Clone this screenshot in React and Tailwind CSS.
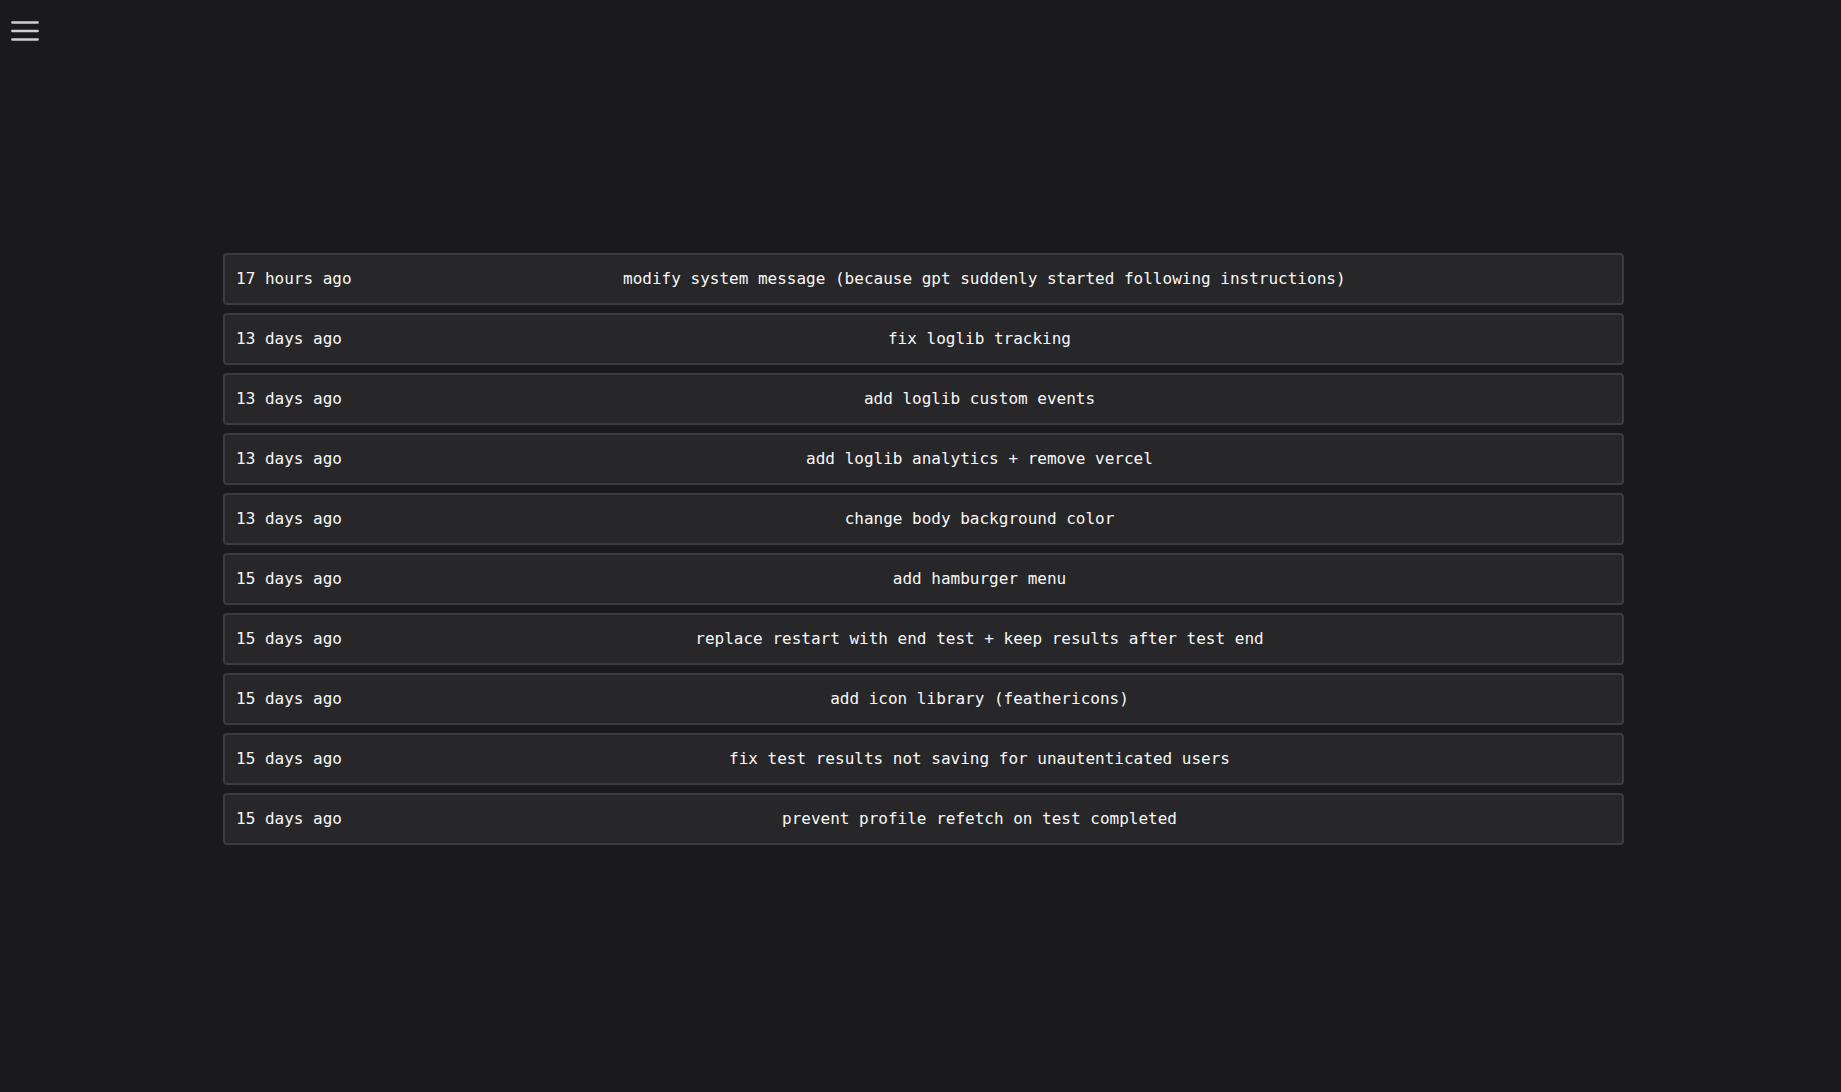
import React from 'react';

const commits = [
    { when: '17 hours ago', msg: 'modify system message (because gpt suddenly started following instructions)' },
    { when: '13 days ago', msg: 'fix loglib tracking' },
    { when: '13 days ago', msg: 'add loglib custom events' },
    { when: '13 days ago', msg: 'add loglib analytics + remove vercel' },
    { when: '13 days ago', msg: 'change body background color' },
    { when: '15 days ago', msg: 'add hamburger menu' },
    { when: '15 days ago', msg: 'replace restart with end test + keep results after test end' },
    { when: '15 days ago', msg: 'add icon library (feathericons)' },
    { when: '15 days ago', msg: 'fix test results not saving for unautenticated users' },
    { when: '15 days ago', msg: 'prevent profile refetch on test completed' },
];

// feather menu icon
const MenuIcon = () => (
    <svg width="34" height="34" viewBox="0 0 24 24" fill="none" stroke="#cfcfd2" strokeWidth="1.6" strokeLinecap="round">
        <line x1="3" y1="6" x2="21" y2="6" />
        <line x1="3" y1="12" x2="21" y2="12" />
        <line x1="3" y1="18" x2="21" y2="18" />
    </svg>
);

const App = () => {
    return (
        <div
            className="min-h-[1092px] w-full bg-[#1a1a1c] text-[#f7f7f8]"
            style={{ fontFamily: '"DejaVu Sans Mono", "Liberation Mono", monospace' }}
        >
            <div className="pl-[8px] pt-[14px] h-[253px]">
                <MenuIcon />
            </div>

            <div className="ml-[223px] w-[1401px] flex flex-col gap-[8px]">
                {commits.map((c, i) => (
                    <div
                        key={i}
                        className="h-[52px] flex items-center gap-[7px] pl-[11px] pr-3 bg-[#27272a] border-2 border-[#3b3b41] rounded-[4px] text-[16px]"
                    >
                        <span className="whitespace-nowrap">{c.when}</span>
                        <span className="flex-1 text-center whitespace-nowrap">{c.msg}</span>
                    </div>
                ))}
            </div>
        </div>
    );
};

export default App;
